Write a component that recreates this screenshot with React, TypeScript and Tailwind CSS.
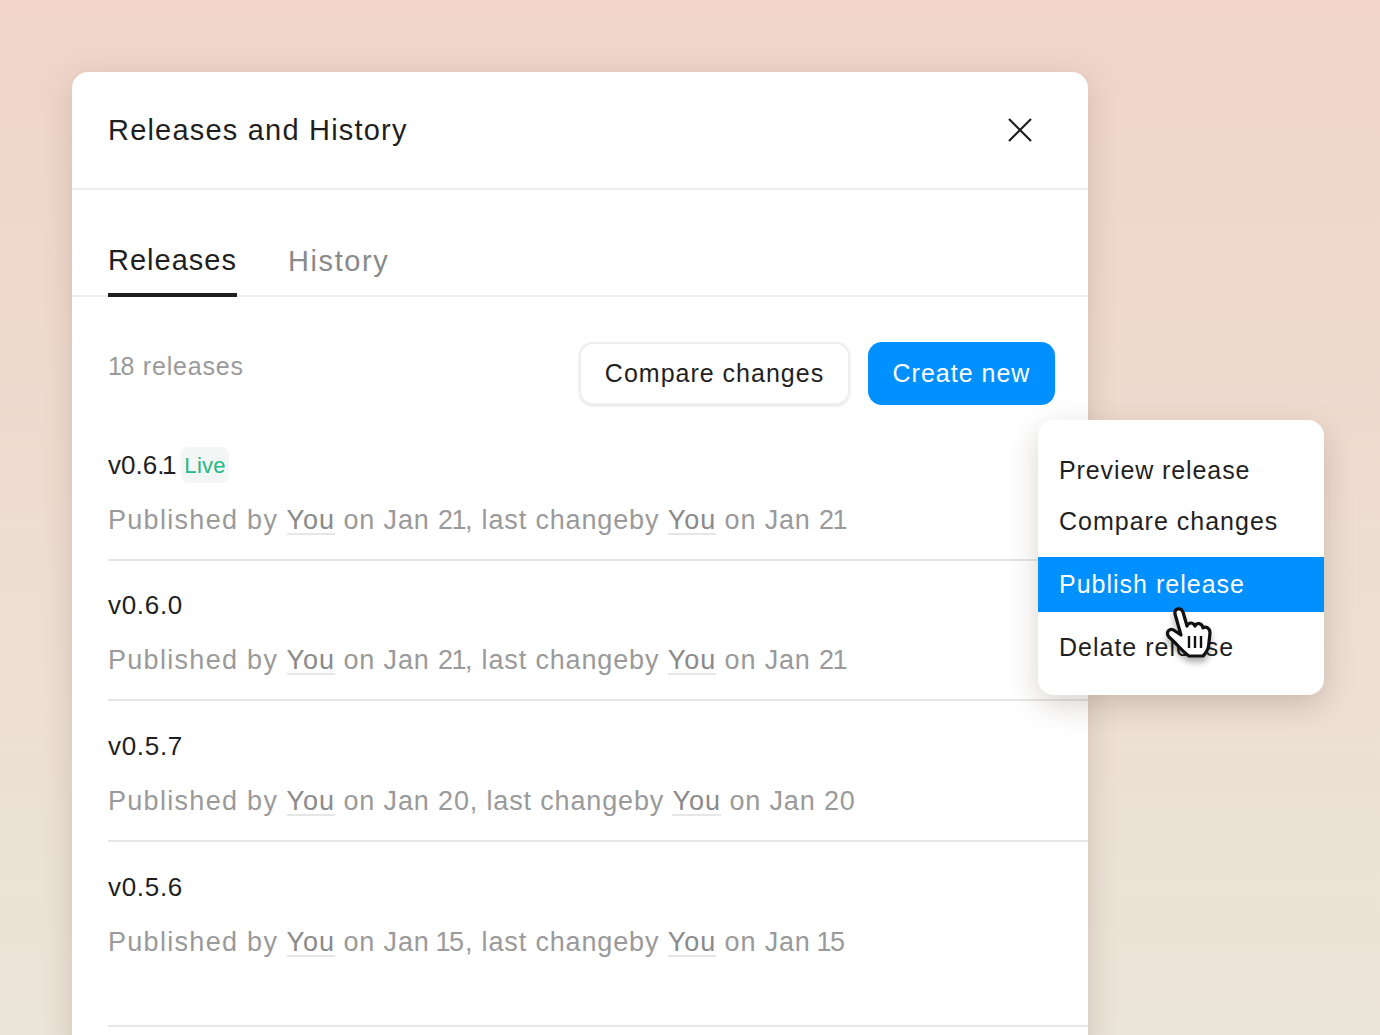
import { Fragment } from "react";

const rows = [
  { v: "v0.6.1", live: true, d1: "Jan 21", d2: "Jan 21" },
  { v: "v0.6.0", live: false, d1: "Jan 21", d2: "Jan 21" },
  { v: "v0.5.7", live: false, d1: "Jan 20", d2: "Jan 20" },
  { v: "v0.5.6", live: false, d1: "Jan 15", d2: "Jan 15" },
];

// The reference face has a narrow figure one.
function Num({ t }: { t: string }) {
  const parts = t.split("1");
  return (
    <>
      {parts.map((part, i) => (
        <Fragment key={i}>
          {i > 0 && (
            <span className={parts[i - 1] === "" ? "tracking-[-1.5px]" : "-ml-[2.5px] tracking-[-1.5px]"}>1</span>
          )}
          {part}
        </Fragment>
      ))}
    </>
  );
}

function You() {
  return <span className="text-[#8a8a8a] border-b-2 border-[#e6e6e6] leading-[26px] inline-block tracking-[1px]">You</span>;
}

export default function App() {
  return (
    <div className="relative w-[1380px] h-[1035px] overflow-hidden bg-gradient-to-b from-[#f0d5c8] to-[#ebe4d8] font-['Liberation_Sans',sans-serif] text-[#1f1f1f] tracking-[1px]">
      <div className="absolute left-[72px] top-[72px] w-[1016px] h-[1100px] bg-white rounded-[16px] shadow-[0_8px_30px_rgba(110,80,60,0.22)]">
        <div className="h-[118px] border-b-2 border-[#eeeeee] flex items-center justify-between pl-[36px] pr-[55px]">
          <div className="text-[29px] leading-[36px] tracking-[1.2px]">Releases and History</div>
          <svg width="26" height="26" viewBox="0 0 26 26" fill="none" stroke="#1f1f1f" strokeWidth="2.2">
            <path d="M2 2 L24 24 M24 2 L2 24" />
          </svg>
        </div>
        <div className="h-[107px] border-b-2 border-[#eeeeee] flex items-end pl-[36px] gap-[51px]">
          <div className="h-[55px] w-[129px] border-b-4 border-[#1f1f1f] -mb-[2px] text-[29px] leading-[36px] tracking-[1px]">Releases</div>
          <div className="h-[53px] text-[29px] leading-[38px] text-[#8a8a8a] tracking-[1.6px]">History</div>
        </div>
        <div className="flex items-start justify-between pl-[36px] pr-[33px] pt-[45px]">
          <div className="text-[25px] leading-[36px] pt-[6px] text-[#9a9a9a] tracking-[0.8px]"><Num t="18" /> releases</div>
          <div className="flex gap-[18px]">
            <div className="w-[271px] h-[63px] rounded-[14px] border-2 border-[#eeeeee] flex items-center justify-center text-[25px] shadow-sm">Compare changes</div>
            <div className="w-[187px] h-[63px] rounded-[14px] bg-[#0090ff] text-white flex items-center justify-center text-[25px]">Create new</div>
          </div>
        </div>
        <div className="pl-[36px] pt-[15px]">
          {rows.map((r, i) => (
            <div key={r.v} className={i < 3 ? "h-[140.7px] border-b-2 border-[#e6e6e6] flex flex-col" : "h-[140.7px] flex flex-col"}>
              <div className={r.live ? "flex items-center h-[72px] pt-[18px] gap-[6px] text-[26px] tracking-[0px]" : "flex items-center h-[72px] pt-[18px] gap-[6px] text-[26px] tracking-[0.7px]"}>
                <span><Num t={r.v} /></span>
                {r.live && <span className="bg-[#f4f6f5] rounded-[8px] px-[3.5px] h-[36px] flex items-center text-[#25b887] text-[22px] tracking-[0.3px]">Live</span>}
              </div>
              <div className="text-[27px] leading-[36px] pt-[9.5px] text-[#9a9a9a] tracking-[0.85px]">
                <span className="tracking-[1.3px]">Published by</span> <You /> on <Num t={r.d1} />, last changeby <You /> on <Num t={r.d2} />
              </div>
            </div>
          ))}
          <div className="h-[44px] border-b-2 border-[#e6e6e6]" />
        </div>
      </div>

      <div className="absolute left-[1038px] top-[420px] w-[286px] h-[275px] bg-white rounded-[16px] shadow-[0_10px_30px_rgba(80,60,50,0.22)] pt-[26px] text-[25px]">
        <div className="h-[50px] pl-[21px] flex items-center tracking-[0.9px]">Preview release</div>
        <div className="h-[50px] mt-[1px] pl-[21px] flex items-center">Compare changes</div>
        <div className="h-[55px] mt-[10px] pl-[21px] flex items-center bg-[#0090ff] text-white">Publish release</div>
        <div className="h-[71px] pl-[21px] flex items-center">Delate release</div>
      </div>

      <svg className="absolute left-[1165px] top-[606px] drop-shadow-[0_5px_3px_rgba(0,0,0,0.3)]" width="48" height="56" viewBox="0 0 48 56">
        <path d="M10 8 C9 2 16 1 18 6 L22 20 C24 16 28 16 30 20 C32 16 37 17 38 22 C41 20 45 22 45 27 L44 36 C44 42 41 47 38 50 L24 50 C18 46 12 38 4 31 C0 26 5 21 10 25 L16 29 Z" fill="#fff" stroke="#111" strokeWidth="3.2" strokeLinejoin="round" />
        <path d="M24 30 V42 M30 30 V42 M36 30 V42" stroke="#111" strokeWidth="2.4" fill="none" />
      </svg>
    </div>
  );
}
